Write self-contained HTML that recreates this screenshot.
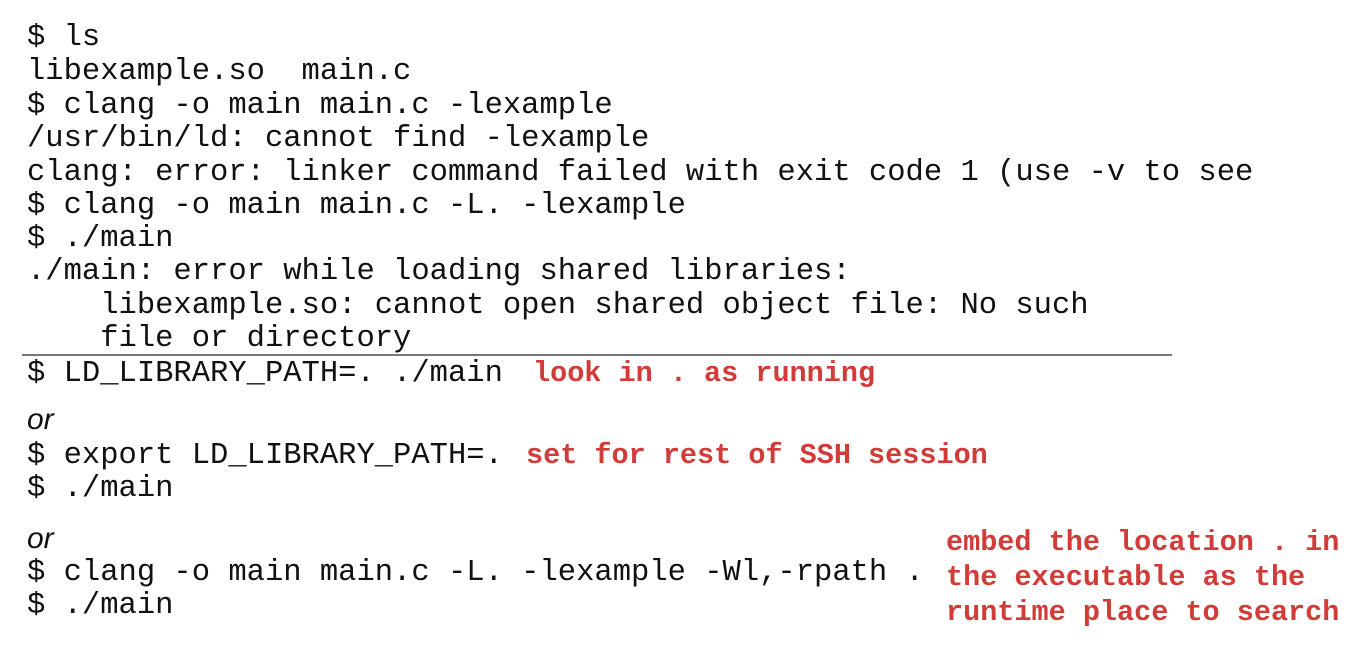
<!DOCTYPE html>
<html><head><style>
body{margin:0;width:1368px;height:658px;background:#fff;position:relative;overflow:hidden}
.l{position:absolute;left:27px;height:34px;line-height:34px;font-family:"Liberation Mono",monospace;font-size:30.5px;color:#111;white-space:pre}
.r{position:absolute;height:34px;line-height:34px;font-family:"Liberation Mono",monospace;font-weight:bold;font-size:28.5px;color:#d23c38;white-space:pre}
.or{position:absolute;left:27px;font-family:"Liberation Sans",sans-serif;font-style:italic;font-size:30px;color:#111;height:34px;line-height:34px}
</style></head><body>
<div class="l" style="top:21px">$ ls</div>
<div class="l" style="top:55px">libexample.so  main.c</div>
<div class="l" style="top:89px">$ clang -o main main.c -lexample</div>
<div class="l" style="top:122px">/usr/bin/ld: cannot find -lexample</div>
<div class="l" style="top:156px">clang: error: linker command failed with exit code 1 (use -v to see</div>
<div class="l" style="top:189px">$ clang -o main main.c -L. -lexample</div>
<div class="l" style="top:222px">$ ./main</div>
<div class="l" style="top:255px">./main: error while loading shared libraries:</div>
<div class="l" style="top:289px">    libexample.so: cannot open shared object file: No such</div>
<div class="l" style="top:322px">    file or directory</div>
<div style="position:absolute;left:22px;top:354px;width:1150px;height:2px;background:#777"></div>
<div class="l" style="top:357px">$ LD_LIBRARY_PATH=. ./main</div>
<div class="r" style="left:533px;top:357px">look in . as running</div>
<div class="or" style="top:403px">or</div>
<div class="l" style="top:439px">$ export LD_LIBRARY_PATH=.</div>
<div class="r" style="left:526px;top:439px">set for rest of SSH session</div>
<div class="l" style="top:472px">$ ./main</div>
<div class="or" style="top:522px">or</div>
<div class="l" style="top:556px">$ clang -o main main.c -L. -lexample -Wl,-rpath .</div>
<div class="l" style="top:589px">$ ./main</div>
<div class="r" style="left:946px;top:526px">embed the location . in</div>
<div class="r" style="left:946px;top:561px">the executable as the</div>
<div class="r" style="left:946px;top:596px">runtime place to search</div>
</body></html>
